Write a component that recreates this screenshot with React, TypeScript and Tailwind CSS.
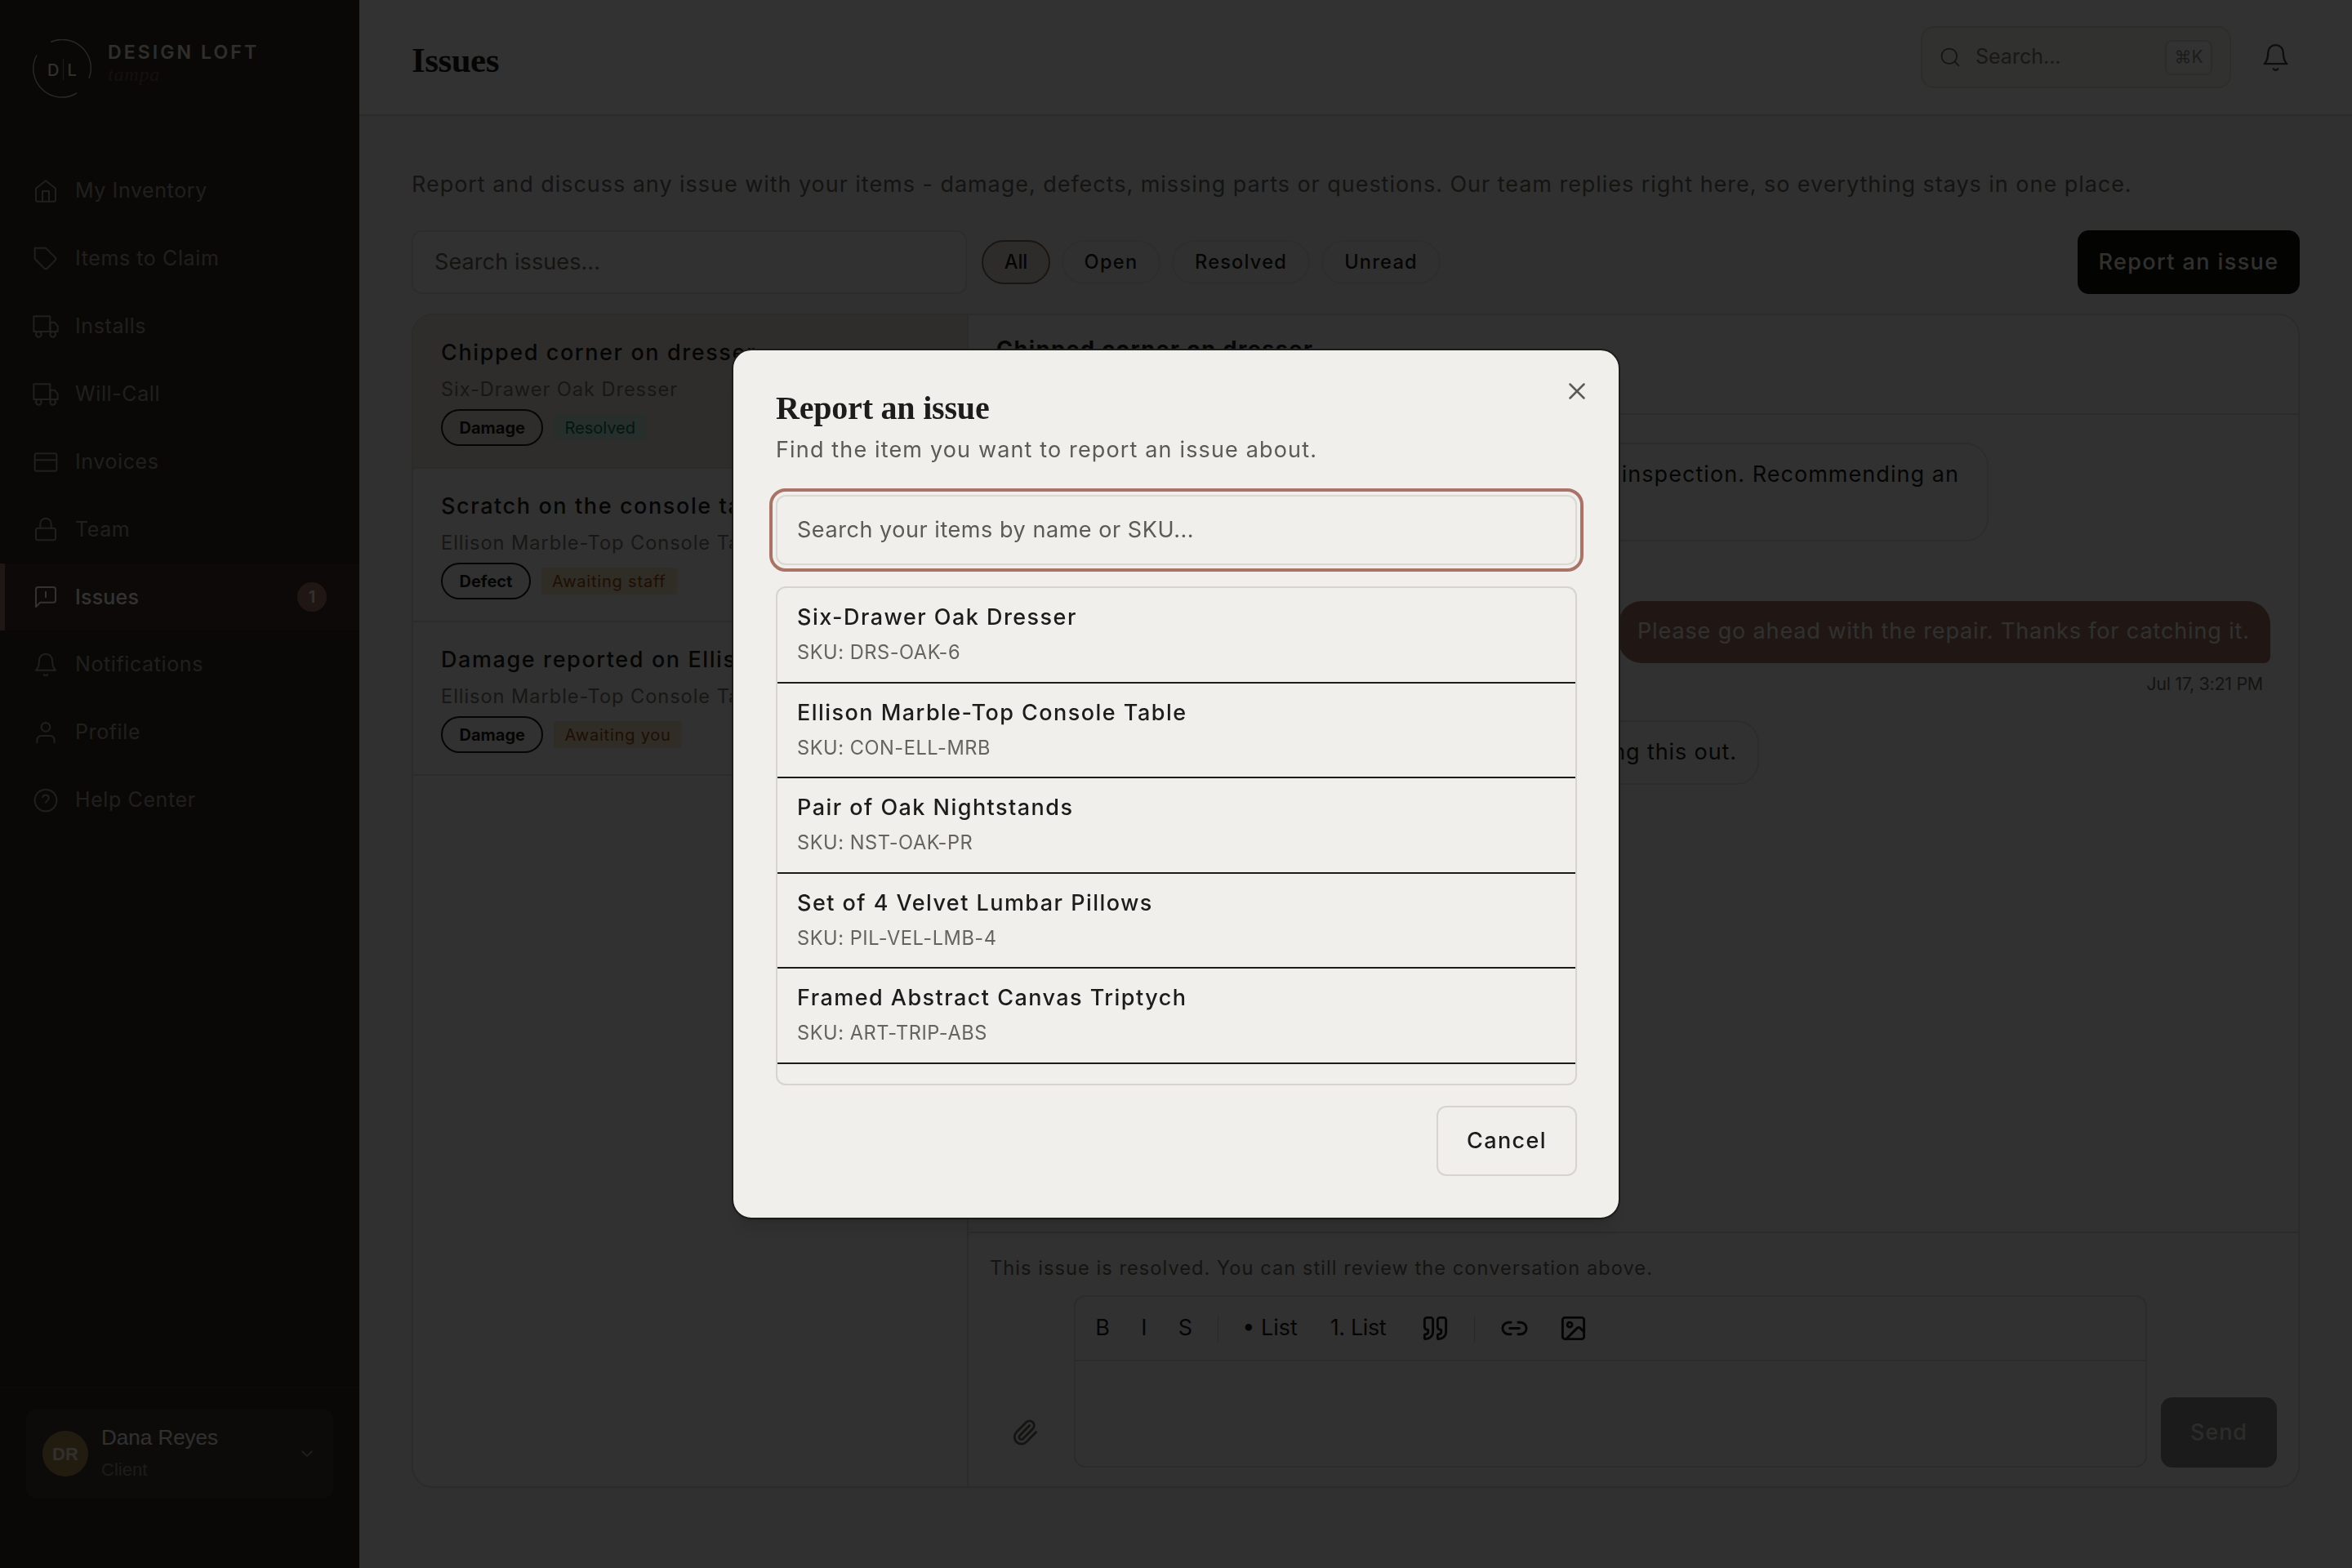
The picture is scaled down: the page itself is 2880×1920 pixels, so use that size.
import { type ReactNode } from 'react'
import { Image, Link2, Paperclip, Quote, X } from 'lucide-react'
import clsx from 'clsx'

interface NavItem {
  label: string
  icon: ReactNode
  badge?: number
}

const navItems: NavItem[] = [
  { label: 'My Inventory', icon: <><path d="M3 9.5 12 2.5l9 7V20a1.5 1.5 0 0 1-1.5 1.5h-15A1.5 1.5 0 0 1 3 20z" /><path d="M9 21.5V12h6v9.5" /></> },
  { label: 'Items to Claim', icon: <path d="M20.59 13.41 13.42 20.58a2 2 0 0 1-2.83 0L2 12V2h10l8.59 8.59a2 2 0 0 1 0 2.82z" /> },
  { label: 'Installs', icon: <Truck /> },
  { label: 'Will-Call', icon: <Truck /> },
  { label: 'Invoices', icon: <><rect x="2" y="4" width="20" height="16" rx="1.5" /><path d="M2 10h20" /></> },
  { label: 'Team', icon: <><rect x="3" y="11" width="18" height="11" rx="2" /><path d="M7 11V7a5 5 0 0 1 10 0v4" /></> },
  { label: 'Issues', icon: <><path d="M21 15a2 2 0 0 1-2 2H7l-4 4V5a2 2 0 0 1 2-2h14a2 2 0 0 1 2 2z" /><path d="M12 7.5v4.5" /></>, badge: 1 },
  { label: 'Notifications', icon: <Bell /> },
  { label: 'Profile', icon: <><path d="M20 21v-2a4 4 0 0 0-4-4H8a4 4 0 0 0-4 4v2" /><circle cx="12" cy="7" r="4" /></> },
  { label: 'Help Center', icon: <><circle cx="12" cy="12" r="10" /><path d="M9.1 9a3 3 0 0 1 5.8 1c0 2-2.9 2.6-2.9 4" /></> },
]

const issues = [
  { title: 'Chipped corner on dresser', item: 'Six-Drawer Oak Dresser', kind: 'Damage', status: 'Resolved' },
  { title: 'Scratch on the console table', item: 'Ellison Marble-Top Console Table', kind: 'Defect', status: 'Awaiting staff' },
  { title: 'Damage reported on Ellison', item: 'Ellison Marble-Top Console Table', kind: 'Damage', status: 'Awaiting you' },
]

const items = [
  { name: 'Six-Drawer Oak Dresser', sku: 'DRS-OAK-6' },
  { name: 'Ellison Marble-Top Console Table', sku: 'CON-ELL-MRB' },
  { name: 'Pair of Oak Nightstands', sku: 'NST-OAK-PR' },
  { name: 'Set of 4 Velvet Lumbar Pillows', sku: 'PIL-VEL-LMB-4' },
  { name: 'Framed Abstract Canvas Triptych', sku: 'ART-TRIP-ABS' },
]

function Truck() {
  return (
    <>
      <path d="M1 2.5h15v14H1z" />
      <path d="M16 8h4l3 3.5v5h-7z" />
      <circle cx="5.5" cy="19" r="2.5" />
      <circle cx="18.5" cy="19" r="2.5" />
    </>
  )
}

function Bell() {
  return (
    <>
      <path d="M18 8A6 6 0 0 0 6 8c0 7-3 9-3 9h18s-3-2-3-9" />
      <path d="M13.73 21a2 2 0 0 1-3.46 0" />
    </>
  )
}

function Icon({ children, className }: { children: ReactNode; className: string }) {
  return (
    <svg viewBox="0 0 24 24" fill="none" stroke="currentColor" strokeWidth="1.5" strokeLinecap="round" strokeLinejoin="round" className={clsx('shrink-0', className)}>
      {children}
    </svg>
  )
}

function Logo() {
  return (
    <div className="flex h-[193px] shrink-0 gap-[20px] pt-[48px] pl-[40px]">
      <svg viewBox="0 0 72 72" fill="none" className="size-[72px]">
        <path d="M22 3.5A35 35 0 0 1 69 48" stroke="#c9c4ba" strokeWidth="1.5" />
        <path d="M54 66A35 35 0 0 1 5 19.5" stroke="#c9c4ba" strokeWidth="1.5" />
        <path d="M37.5 24v26" stroke="#8d887e" strokeWidth="1" />
        <text x="18" y="45" fill="#f0efeb" fontFamily="Inter" fontWeight="500" fontSize="20">D</text>
        <text x="42.5" y="45" fill="#f0efeb" fontFamily="Inter" fontWeight="500" fontSize="20">L</text>
      </svg>
      <div className="flex flex-col pt-[4px]">
        <span className="text-[23px] leading-[24px] font-semibold tracking-[3.1px] text-[#e6e5e1]">DESIGN LOFT</span>
        <span className="font-['Liberation_Serif',serif] text-[24px] leading-[30px] tracking-[0.8px] italic text-[#6b5046]">tampa</span>
      </div>
    </div>
  )
}

function Sidebar() {
  return (
    <aside className="flex w-[440px] shrink-0 flex-col bg-[#2d2923]">
      <Logo />
      <nav className="flex flex-1 flex-col gap-[0.9px]">
        {navItems.map((item) => (
          <a
            key={item.label}
            className={clsx(
              'flex h-[82px] shrink-0 items-center border-l-[6px] pr-[40px] pl-[34px] text-[25px]',
              item.badge ? 'border-[#a07464] bg-[#412e28] font-medium tracking-[0.2px] text-[#f8f7f3]' : 'border-transparent tracking-[0.6px] text-[#a09c94]',
            )}
          >
            <Icon className="mr-[20px] size-[32px]">{item.icon}</Icon>
            <span className="flex-1">{item.label}</span>
            {item.badge && (
              <span className="flex size-[36px] items-center justify-center rounded-full bg-[#a07464] text-[20px] font-semibold">{item.badge}</span>
            )}
          </a>
        ))}
      </nav>
      <div className="h-[222px] border-t-2 border-[#39342d] px-[32px] pt-[25px] font-['Liberation_Sans',sans-serif]">
        <div className="flex h-[110px] items-center rounded-[14px] bg-[#403b34] px-[20px]">
          <span className="flex size-[56px] items-center justify-center rounded-full bg-[#a58550] text-[22px] font-bold text-[#f0efeb]">DR</span>
          <div className="ml-[16px] flex flex-1 flex-col gap-[6px]">
            <span className="text-[26px] leading-[34px] text-[#f0efeb]">Dana Reyes</span>
            <span className="text-[22px] leading-[34px] text-[#8c8880]">Client</span>
          </div>
          <Icon className="size-[24px] text-[#b4b0a8]"><path d="m6 9 6 6 6-6" /></Icon>
        </div>
      </div>
    </aside>
  )
}

function Header() {
  return (
    <header className="flex h-[142px] shrink-0 items-center justify-between border-b-2 border-[#d8d6cf] bg-[#fbfafa] pr-[75px] pl-[64px]">
      <h1 className="pt-[7px] font-['Liberation_Serif',serif] text-[43px] leading-[48px] font-bold tracking-[-0.5px]">Issues</h1>
      <div className="flex items-center gap-[36px]">
        <div className="flex h-[76px] w-[380px] items-center rounded-[16px] border-2 border-[#dedcd8] bg-[#f3f2f0] pr-[21px] pl-[20px]">
          <Icon className="size-[28px] text-[#66645e]"><circle cx="11" cy="11" r="8" /><path d="m21 21-4.3-4.3" /></Icon>
          <span className="ml-[17px] flex-1 text-[25px] text-[#7c7a73]">Search...</span>
          <kbd className="flex h-[43px] w-[58px] items-center justify-center rounded-[8px] border-2 border-[#dedcd8] bg-[#fbfafa] font-['Inter','DejaVu_Sans',sans-serif] text-[21px] text-[#8e8c85]">⌘K</kbd>
        </div>
        <Icon className="size-[37px] text-[#45443f]"><Bell /></Icon>
      </div>
    </header>
  )
}

function Filters() {
  const pill = 'flex h-[54px] items-center justify-center rounded-full border-2 text-[23.6px] font-medium'
  return (
    <div className="mt-[38px] flex h-[78px] items-center">
      <div className="flex h-full w-[680px] items-center rounded-[12px] border-2 border-[#dedcd8] bg-[#f5f4f2] px-[26px] text-[27px] tracking-[0.1px] text-[#66645e]">Search issues...</div>
      <div className="ml-[18px] flex gap-[14px]">
        <span className={clsx(pill, 'w-[84px] border-[#85695a] bg-[#e2d9cf]')}>All</span>
        <span className={clsx(pill, 'w-[121px] border-[#e3e1dd] tracking-[1.3px]')}>Open</span>
        <span className={clsx(pill, 'w-[169px] border-[#e3e1dd] tracking-[1.2px]')}>Resolved</span>
        <span className={clsx(pill, 'w-[146px] border-[#e3e1dd] tracking-[1.2px]')}>Unread</span>
      </div>
      <button className="ml-auto h-full w-[272px] rounded-[14px] bg-[#0f0f0e] text-[27px] font-medium tracking-[1.4px] text-[#f0efeb]">Report an issue</button>
    </div>
  )
}

function IssueList() {
  return (
    <div className="w-[680px] shrink-0 border-r-2 border-[#d8d6cf]">
      {issues.map((issue, i) => (
        <div key={issue.title} className={clsx('h-[188px] border-b-2 border-[#d8d6cf] pt-[26px] pl-[34px]', i === 0 && 'bg-[#e9e0d8]')}>
          <p className="text-[27px] leading-[40px] font-medium tracking-[1.6px]">{issue.title}</p>
          <p className="mt-[8px] text-[23.6px] leading-[34px] tracking-[0.95px] text-[#75736c]">{issue.item}</p>
          <div className="mt-[7px] flex items-center gap-[13px]">
            <span className="flex h-[45px] items-center rounded-full border-[2.5px] border-[#1c1c1a] px-[20.5px] text-[20px] font-bold">{issue.kind}</span>
            <span
              className={clsx(
                'flex h-[33px] items-center rounded-[4px] px-[13px] text-[20px]',
                issue.status === 'Resolved' ? 'bg-[#c8e6d8] text-[#047857]' : 'bg-[#e8deba] tracking-[0.8px] text-[#9a4a14]',
              )}
            >
              {issue.status}
            </span>
          </div>
        </div>
      ))}
    </div>
  )
}

function Thread() {
  const bubble = 'flex items-center rounded-[28px] text-[27px] leading-[44px]'
  return (
    <div className="flex flex-1 flex-col">
      <div className="h-[122px] shrink-0 border-b-2 border-[#d8d6cf] px-[34px] pt-[22px]">
        <h2 className="text-[27px] leading-[40px] font-bold tracking-[1.45px]">Chipped corner on dresser</h2>
      </div>
      <div className="flex flex-1 flex-col px-[34px] pt-[34px]">
        <div className={clsx(bubble, 'h-[121px] w-[1215px] rounded-bl-[8px] border-2 border-[#dedcd8] px-[34px] pb-[44px] tracking-[1.05px]')}>
          <p className="w-full text-right">We noticed this during inspection. Recommending an</p>
        </div>
        <div className={clsx(bubble, 'mt-[73px] h-[76px] w-[798px] self-end rounded-br-[8px] bg-[#a07464] pb-[2px] pl-[23px] tracking-[0.87px] text-[#f0efeb]')}>
          Please go ahead with the repair. Thanks for catching it.
        </div>
        <span className="mt-[9px] mb-[1px] self-end pr-[9px] text-[21.5px] leading-[32px] tracking-[-0.3px] text-[#66645e]">Jul 17, 3:21 PM</span>
        <div className={clsx(bubble, 'mt-[28px] h-[79px] w-[934px] justify-end rounded-bl-[8px] border-2 border-[#dedcd8] pr-[25px] pb-[2px] tracking-[0.9px]')}>
          Thanks for confirming. We will be sorting this out.
        </div>
      </div>
      <Composer />
    </div>
  )
}

function Composer() {
  return (
    <div className="h-[312px] shrink-0 border-t-2 border-[#d8d6cf] px-[26px] pt-[26px]">
      <p className="text-[23.6px] leading-[34px] tracking-[1.05px] text-[#66645e]">This issue is resolved. You can still review the conversation above.</p>
      <div className="mt-[16px] flex h-[211px] items-end gap-[17px]">
        <span className="flex size-[86px] items-center justify-center">
          <Paperclip className="size-[34px] text-[#66645e]" />
        </span>
        <div className="flex h-full flex-1 flex-col rounded-[14px] border-2 border-[#d8d6cf]">
          <div className="flex h-[79px] items-center border-b-2 border-[#d8d6cf] pl-[7px] text-[27px]">
            <span className="w-[52px] text-center">B</span>
            <span className="w-[50px] text-center">I</span>
            <span className="w-[51px] text-center">S</span>
            <span className="mx-[14px] h-[34px] w-px bg-[#cfcdc6]" />
            <span className="w-[98px] text-center">• List</span>
            <span className="w-[118px] text-center tracking-[-0.4px]">1. List</span>
            <span className="flex w-[70px] justify-center"><Quote className="size-[35px]" /></span>
            <span className="mx-[13px] h-[34px] w-px bg-[#cfcdc6]" />
            <span className="flex w-[70px] justify-center"><Link2 className="size-[35px]" /></span>
            <span className="flex w-[74px] justify-center"><Image className="size-[35px]" /></span>
          </div>
        </div>
        <button className="h-[86px] w-[142px] rounded-[14px] bg-[#888887] text-[27px] font-medium tracking-[0.9px] text-[#dad9d6]">Send</button>
      </div>
    </div>
  )
}

function ReportDialog() {
  return (
    <div className="fixed inset-0 flex items-center justify-center bg-black/80">
      <div className="relative h-[1066px] w-[1088px] rounded-[24px] border-2 border-[#1c1c1a] bg-[#f0efeb] pt-[47px] pr-[51px] pl-[52px] shadow-xl">
        <X className="absolute top-[33px] right-[34px] size-[34px] text-[#5b5a54]" strokeWidth={1.75} />
        <h2 className="font-['Liberation_Serif',serif] text-[40px] leading-[48px] font-bold tracking-[-0.2px]">Report an issue</h2>
        <p className="mt-[9px] text-[27px] leading-[36px] tracking-[1.15px] text-[#5b5a54]">Find the item you want to report an issue about.</p>
        <div className="mt-[37px] flex h-[86px] items-center rounded-[12px] border-2 border-[#dad8d0] px-[24px] text-[27px] tracking-[0.55px] text-[#5b5a54] outline-4 outline-offset-4 outline-[#a97467]">
          Search your items by name or SKU...
        </div>
        <ul className="mt-[26px] h-[611px] overflow-hidden rounded-[12px] border-2 border-[#d6d4cd]">
          {items.map((item) => (
            <li key={item.sku} className="h-[116.5px] border-b-2 border-[#1c1c1a] px-[24px] pt-[16px]">
              <p className="text-[27px] leading-[40px] font-medium tracking-[1.46px]">{item.name}</p>
              <p className="mt-[6px] text-[23.6px] leading-[34px] tracking-[0.54px] text-[#66645e]">SKU: {item.sku}</p>
            </li>
          ))}
        </ul>
        <button className="mt-[25px] ml-auto block h-[86px] w-[172px] rounded-[12px] border-2 border-[#d6d4cd] text-[27px] font-medium tracking-[1.4px]">Cancel</button>
      </div>
    </div>
  )
}

export default function App() {
  return (
    <div className="flex h-[1920px] w-[2880px] overflow-hidden bg-[#f0efee] font-['Inter',sans-serif] text-[#1c1c1a]">
      <Sidebar />
      <div className="flex flex-1 flex-col">
        <Header />
        <main className="flex flex-col px-[64px] pt-[66px]">
          <p className="h-[36px] text-[27px] leading-[36px] tracking-[0.96px] whitespace-nowrap text-[#66645e]">
            Report and discuss any issue with your items - damage, defects, missing parts or questions. Our team replies right here, so everything stays in one place.
          </p>
          <Filters />
          <section className="mt-[24px] flex h-[1438px] overflow-hidden rounded-[26px] border-2 border-[#d8d6cf] bg-[#f5f4f3]">
            <IssueList />
            <Thread />
          </section>
        </main>
      </div>
      <ReportDialog />
    </div>
  )
}
